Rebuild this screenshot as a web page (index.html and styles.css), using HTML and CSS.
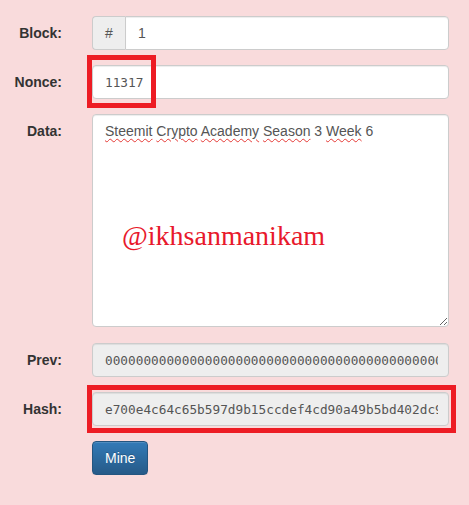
FILE: index.html
```html
<!DOCTYPE html>
<html>
<head>
<meta charset="utf-8">
<link rel="stylesheet" href="styles.css">
</head>
<body>
<form class="block-form">
  <div class="form-group">
    <label class="control-label">Block:</label>
    <div class="control">
      <div class="input-group">
        <span class="addon">#</span>
        <input class="form-control group-input" type="text" value="1">
      </div>
    </div>
  </div>
  <div class="form-group">
    <label class="control-label">Nonce:</label>
    <div class="control">
      <input class="form-control mono" type="text" value="11317">
      <div class="mark mark-nonce"></div>
    </div>
  </div>
  <div class="form-group">
    <label class="control-label">Data:</label>
    <div class="control">
      <div class="form-control textarea"><span class="typo">Steemit</span> <span class="typo">Crypto</span> <span class="typo">Academy</span> <span class="typo">Season</span> 3 <span class="typo">Week</span> 6</div>
      <div class="signature">@ikhsanmanikam</div>
    </div>
  </div>
  <div class="form-group prev-group">
    <label class="control-label">Prev:</label>
    <div class="control">
      <input class="form-control mono readonly" type="text" readonly value="0000000000000000000000000000000000000000000000000000000000000000">
    </div>
  </div>
  <div class="form-group">
    <label class="control-label">Hash:</label>
    <div class="control">
      <input class="form-control mono readonly" type="text" readonly value="e700e4c64c65b597d9b15ccdef4cd90a49b5bd402dc9f3a1e6b07c2d84f5a913">
      <div class="mark mark-hash"></div>
    </div>
  </div>
  <div class="form-group">
    <span class="control-label"></span>
    <div class="control">
      <button type="button" class="btn-mine">Mine</button>
    </div>
  </div>
</form>
</body>
</html>
```

FILE: styles.css
```css
html, body {
  margin: 0;
  padding: 0;
  background: #f9dbdc;
  font-family: "Liberation Sans", Arial, sans-serif;
  font-size: 14px;
  color: #333;
}

.block-form {
  padding: 16px 20px 0 0;
  display: flex;
  flex-direction: column;
  gap: 15px;
}

.form-group {
  display: flex;
  align-items: flex-start;
}

.prev-group {
  margin-top: 1px;
}

.control-label {
  width: 62px;
  flex: none;
  margin-right: 30px;
  padding-top: 7px;
  line-height: 20px;
  text-align: right;
  font-weight: bold;
  color: #333;
}

.control {
  flex: 1;
  min-width: 0;
  position: relative;
}

.form-control {
  display: block;
  box-sizing: border-box;
  width: 100%;
  height: 34px;
  padding: 6px 12px;
  font-family: "Liberation Sans", Arial, sans-serif;
  font-size: 14px;
  line-height: 20px;
  color: #555;
  background: #fff;
  border: 1px solid #ccc;
  border-radius: 4px;
  box-shadow: inset 0 1px 1px rgba(0, 0, 0, 0.075);
  outline: none;
}

.mono {
  font-family: "DejaVu Sans Mono", "Liberation Mono", monospace;
  font-size: 12.75px;
}

.readonly {
  background: #eee;
  padding-right: 10px;
}

.input-group {
  display: flex;
}

.addon {
  box-sizing: border-box;
  width: 33px;
  height: 34px;
  flex: none;
  display: flex;
  align-items: center;
  justify-content: center;
  background: #eee;
  border: 1px solid #ccc;
  border-right: 0;
  border-radius: 4px 0 0 4px;
  color: #555;
  font-size: 14px;
}

.group-input {
  border-radius: 0 4px 4px 0;
}

.textarea {
  height: 213px;
  resize: vertical;
  overflow: auto;
  white-space: pre-wrap;
}

.typo {
  text-decoration: underline wavy #e53935;
  text-decoration-thickness: 1px;
  text-underline-offset: 2px;
}

.signature {
  position: absolute;
  left: 30px;
  top: 108px;
  font-family: "Liberation Serif", "Times New Roman", serif;
  font-size: 28px;
  line-height: 28px;
  color: #e8192c;
  white-space: nowrap;
}

.mark {
  position: absolute;
  border: 5px solid #ed1c24;
  box-sizing: border-box;
  pointer-events: none;
}

.mark-nonce {
  left: -5px;
  top: -10px;
  width: 69px;
  height: 53px;
}

.mark-hash {
  left: -5px;
  top: -7px;
  right: -7px;
  height: 48px;
}

.btn-mine {
  box-sizing: border-box;
  height: 34px;
  padding: 6px 12px;
  font-family: "Liberation Sans", Arial, sans-serif;
  font-size: 14px;
  line-height: 20px;
  color: #fff;
  text-shadow: 0 -1px 0 rgba(0, 0, 0, 0.2);
  background: linear-gradient(to bottom, #337ab7 0%, #265a88 100%);
  border: 1px solid #245580;
  border-radius: 4px;
  box-shadow: inset 0 1px 0 rgba(255, 255, 255, 0.15), 0 1px 1px rgba(0, 0, 0, 0.075);
  cursor: pointer;
}
```
